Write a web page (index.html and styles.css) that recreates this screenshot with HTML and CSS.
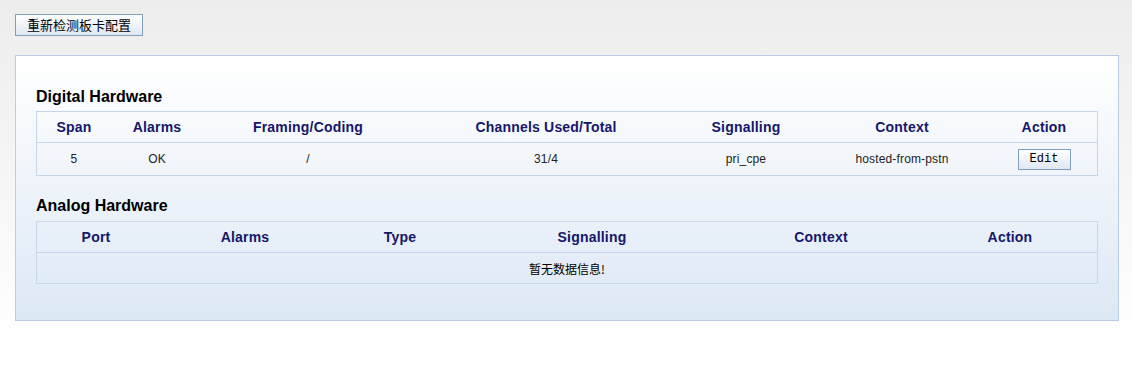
FILE: index.html
```html
<!DOCTYPE html>
<html lang="zh-CN">
<head>
    <meta charset="UTF-8">
    <title>Hardware</title>
    <link rel="stylesheet" href="styles.css">
</head>
<body>

<button type="button" class="btn-detect">重新检测板卡配置</button>

<div class="panel">
    <h3>Digital Hardware</h3>
    <table class="hw digital">
        <thead>
            <tr>
                <th>Span</th>
                <th>Alarms</th>
                <th>Framing/Coding</th>
                <th>Channels Used/Total</th>
                <th>Signalling</th>
                <th>Context</th>
                <th>Action</th>
            </tr>
        </thead>
        <tbody>
            <tr>
                <td>5</td>
                <td>OK</td>
                <td>/</td>
                <td>31/4</td>
                <td>pri_cpe</td>
                <td>hosted-from-pstn</td>
                <td><button type="button" class="btn-edit">Edit</button></td>
            </tr>
        </tbody>
    </table>

    <h3>Analog Hardware</h3>
    <table class="hw analog">
        <thead>
            <tr>
                <th>Port</th>
                <th>Alarms</th>
                <th>Type</th>
                <th>Signalling</th>
                <th>Context</th>
                <th>Action</th>
            </tr>
        </thead>
        <tbody>
            <tr>
                <td colspan="6" class="empty">暂无数据信息!</td>
            </tr>
        </tbody>
    </table>
</div>

</body>
</html>
```

FILE: styles.css
```css
html {
    background: #ffffff;
}
body {
    margin: 0;
    padding: 14px 13px 14px 15px;
    min-height: 340px;
    font-family: "Liberation Sans", Arial, "Noto Sans CJK SC", sans-serif;
    font-size: 12px;
    color: #222;
    background: linear-gradient(to bottom, #ededed 0px, #f6f6f6 180px, #ffffff 340px);
}
.btn-detect {
    display: block;
    height: 22px;
    width: 128px;
    padding: 0;
    font-family: "Noto Sans CJK SC", sans-serif;
    font-size: 13px;
    line-height: 20px;
    color: #000;
    border: 1px solid #7f9ec0;
    background: linear-gradient(to bottom, #ffffff, #dfe7f3);
    cursor: pointer;
}
.panel {
    margin-top: 19px;
    padding: 0 20px 36px 20px;
    border: 1px solid #b9cde3;
    background: linear-gradient(to bottom, #ffffff 0%, #f2f6fb 40%, #dce8f5 100%);
}
.panel h3 {
    margin: 31px 0 4px 0;
    font-size: 16px;
    line-height: 20px;
    font-weight: bold;
    color: #000;
}
.hw + h3 {
    margin-top: 20px !important;
    margin-bottom: 5px !important;
}
.hw {
    width: 100%;
    border-collapse: collapse;
    table-layout: fixed;
    border: 1px solid #c7d7eb;
}
.hw th {
    height: 30px;
    padding: 0;
    font-size: 14px;
    font-weight: bold;
    letter-spacing: 0.2px;
    color: #16166b;
    text-align: center;
    border-bottom: 1px solid #c7d7eb;
}
.hw td {
    padding: 0;
    text-align: center;
    letter-spacing: 0.15px;
    color: #222;
}
.digital td {
    height: 32px;
}
.analog td {
    height: 30px;
}
.digital th:nth-child(1) { width: 74px; }
.digital th:nth-child(2) { width: 92px; }
.digital th:nth-child(3) { width: 210px; }
.digital th:nth-child(4) { width: 266px; }
.digital th:nth-child(5) { width: 134px; }
.digital th:nth-child(6) { width: 178px; }
.analog th:nth-child(1) { width: 118px; }
.analog th:nth-child(2) { width: 180px; }
.analog th:nth-child(3) { width: 130px; }
.analog th:nth-child(4) { width: 254px; }
.analog th:nth-child(5) { width: 204px; }
.empty {
    font-family: "Noto Sans CJK SC", sans-serif;
    letter-spacing: 0 !important;
    color: #000 !important;
}
.btn-edit {
    width: 53px;
    height: 21px;
    padding: 0;
    font-family: "Liberation Mono", "DejaVu Sans Mono", monospace;
    font-size: 12px;
    letter-spacing: 0;
    color: #000;
    border: 1px solid #7f9ec0;
    background: linear-gradient(to bottom, #ffffff, #dfe7f3);
    vertical-align: middle;
    cursor: pointer;
}
```
